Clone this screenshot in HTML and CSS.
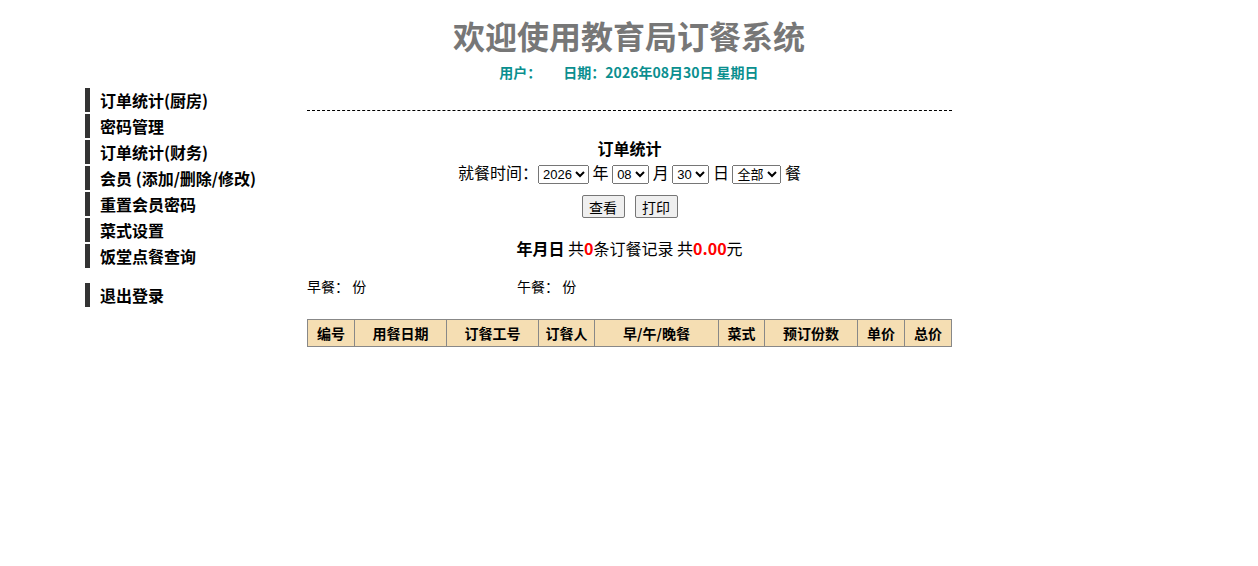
FILE: index.html
```html
<!DOCTYPE html>
<html lang="zh">
<head>
<meta charset="utf-8">
<title>欢迎使用教育局订餐系统</title>
<link rel="stylesheet" href="styles.css">
</head>
<body>
<header class="top">
  <h1 class="title">欢迎使用教育局订餐系统</h1>
  <div class="info"><span class="user">用户：</span><span class="date">日期：2026年08月30日 星期日</span></div>
</header>
<div class="layout">
  <nav class="side">
    <ul class="menu">
      <li class="item">订单统计(厨房)</li>
      <li class="item">密码管理</li>
      <li class="item">订单统计(财务)</li>
      <li class="item">会员 (添加/删除/修改)</li>
      <li class="item">重置会员密码</li>
      <li class="item">菜式设置</li>
      <li class="item">饭堂点餐查询</li>
    </ul>
    <ul class="menu logout">
      <li class="item">退出登录</li>
    </ul>
  </nav>
  <main class="main">
    <div class="rule"></div>
    <h2 class="sec">订单统计</h2>
    <div class="filter">就餐时间：<select class="sel"><option>2026</option></select> 年 <select class="sel"><option>08</option></select> 月 <select class="sel"><option>30</option></select> 日 <select class="sel"><option>全部</option></select> 餐</div>
    <div class="btns"><button class="btn">查看</button><button class="btn">打印</button></div>
    <div class="summary"><b>年月日</b> 共<span class="red">0</span>条订餐记录 共<span class="red">0.00</span>元</div>
    <div class="counts"><span class="c1">早餐： 份</span><span class="c2">午餐： 份</span></div>
    <table class="grid">
      <thead>
        <tr>
          <th style="width:46px">编号</th>
          <th style="width:91px">用餐日期</th>
          <th style="width:91px">订餐工号</th>
          <th style="width:55px">订餐人</th>
          <th style="width:123px">早/午/晚餐</th>
          <th style="width:45px">菜式</th>
          <th style="width:92px">预订份数</th>
          <th style="width:46px">单价</th>
          <th>总价</th>
        </tr>
      </thead>
    </table>
  </main>
</div>
</body>
</html>
```
FILE: styles.css
```css
body {
  margin: 8px;
  font-family: "Noto Sans CJK SC", "Noto Sans", sans-serif;
  color: #000;
  background: #fff;
}
.top {
  text-align: center;
}
.title {
  margin: 7px 0 0;
  font-size: 32px;
  line-height: 40px;
  font-weight: bold;
  color: #777;
}
.info {
  margin-top: 7px;
  font-size: 14px;
  line-height: 20px;
  font-weight: bold;
  color: #0a8f8f;
}
.user {
  margin-right: 22px;
}
.layout {
  display: flex;
  margin-left: 77px;
  margin-top: 6px;
}
.side {
  width: 222px;
  flex: none;
}
.menu {
  list-style: none;
  margin: 0;
  padding: 0;
}
.item {
  border-left: 5px solid #333;
  padding-left: 10px;
  height: 24px;
  line-height: 24px;
  margin-bottom: 2px;
  font-size: 16px;
  font-weight: bold;
}
.logout {
  margin-top: 15px;
}
.main {
  width: 645px;
  text-align: center;
  font-size: 16px;
}
.rule {
  margin-top: 22px;
  border-top: 1px dashed #000;
}
.sec {
  margin: 27px 0 0;
  font-size: 16px;
  line-height: 20px;
  font-weight: bold;
}
.filter {
  line-height: 28px;
  font-size: 16px;
}
.sel {
  font-family: "Liberation Sans", "Noto Sans CJK SC", sans-serif;
  font-size: 13px;
  height: 19px;
  padding: 0;
}
.btns {
  margin-top: 9px;
  display: flex;
  justify-content: center;
  gap: 10px;
}
.btn {
  font-family: "Noto Sans CJK SC", sans-serif;
  font-size: 14px;
  width: 43px;
  height: 23px;
  padding: 0;
  border: 1px solid #767676;
  border-radius: 2px;
  background: #efefef;
}
.summary {
  margin-top: 19px;
  line-height: 22px;
}
.red {
  color: #f00;
  font-weight: bold;
}
.counts {
  margin-top: 16px;
  text-align: left;
  font-size: 14px;
  line-height: 22px;
  white-space: pre;
}
.c1 {
  display: inline-block;
  width: 210px;
}
.grid {
  margin-top: 22px;
  width: 645px;
  border-collapse: collapse;
  table-layout: fixed;
}
.grid th {
  background: #f5deb3;
  border: 1px solid #888;
  height: 26px;
  padding: 0;
  font-size: 14px;
  font-weight: bold;
}
```
